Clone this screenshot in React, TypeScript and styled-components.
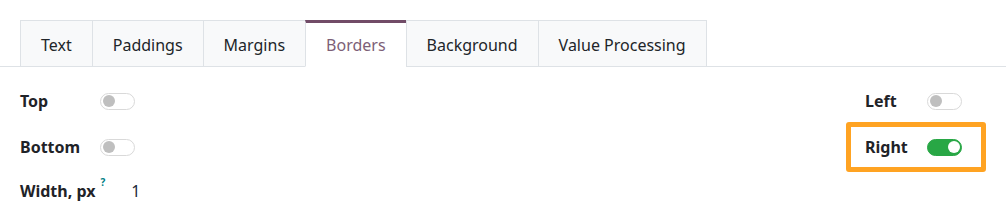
import React from 'react';
import styled, { createGlobalStyle } from 'styled-components';

const GlobalStyle = createGlobalStyle`
    html, body {
        margin: 0;
        padding: 0;
        background: #ffffff;
        font-family: 'Noto Sans', 'Open Sans', sans-serif;
        color: #212529;
    }
`;

export const Page = styled.div`
    width: 1006px;
    height: 219px;
    overflow: hidden;
    background: #fff;
`;

export const TabBar = styled.div`
    display: flex;
    margin-top: 20px;
    padding-left: 20px;
    border-bottom: 1px solid #dee2e6;
`;

export const Tab = styled.div<{ $active?: boolean }>`
    display: flex;
    align-items: center;
    height: 47px;
    box-sizing: border-box;
    padding: 0 20px;
    margin-bottom: -1px;
    margin-left: -1px;
    font-size: 16px;
    border: 1px solid #dee2e6;
    border-top: ${(p) => (p.$active ? '3px solid #714b67' : '1px solid #dee2e6')};
    border-bottom: ${(p) => (p.$active ? '1px solid #fff' : '1px solid #dee2e6')};
    background: ${(p) => (p.$active ? '#fff' : '#f8f9fa')};
    color: ${(p) => (p.$active ? '#7d5f77' : '#212529')};
    padding-top: ${(p) => (p.$active ? '0px' : '2px')};
    &:first-child {
        margin-left: 0;
    }
`;

export const Form = styled.div`
    display: flex;
    justify-content: space-between;
    padding: 22px 44px 0 20px;
`;

export const Column = styled.div`
    display: flex;
    flex-direction: column;
`;

export const Row = styled.div<{ $gap?: number; $highlight?: boolean }>`
    position: relative;
    display: flex;
    align-items: center;
    height: 24px;
    margin-top: ${(p) => p.$gap ?? 0}px;
    ${(p) =>
        p.$highlight &&
        `
        &::after {
            content: '';
            position: absolute;
            left: -19px;
            right: -24px;
            top: -13px;
            bottom: -13px;
            border: 5px solid #ffa322;
            border-radius: 3px;
        }
    `}
`;

export const Label = styled.label<{ $width?: number }>`
    display: inline-flex;
    align-items: flex-start;
    width: ${(p) => (p.$width ? `${p.$width}px` : 'auto')};
    font-size: 16px;
    font-weight: 700;
    color: #1f2328;
`;

export const Help = styled.sup`
    margin-left: 5px;
    font-size: 10px;
    font-weight: 700;
    color: #017e84;
    line-height: 1;
    position: relative;
    top: -3px;
`;

export const Value = styled.span`
    margin-left: 26px;
    font-size: 16px;
    color: #1d2a3a;
`;

export const Switch = styled.span<{ $on?: boolean }>`
    position: relative;
    display: inline-block;
    width: 35px;
    height: 17px;
    box-sizing: border-box;
    border-radius: 9px;
    border: 1px solid ${(p) => (p.$on ? '#28a745' : '#d9d9d9')};
    background: ${(p) => (p.$on ? '#28a745' : '#fff')};
    &::after {
        content: '';
        position: absolute;
        top: 1.5px;
        left: ${(p) => (p.$on ? '19.5px' : '2px')};
        width: 12px;
        height: 12px;
        border-radius: 50%;
        background: ${(p) => (p.$on ? '#fff' : '#bfbfbf')};
    }
`;

const tabs = ['Text', 'Paddings', 'Margins', 'Borders', 'Background', 'Value Processing'];

export default function App() {
    return (
        <Page>
            <GlobalStyle />
            <TabBar>
                {tabs.map((t) => (
                    <Tab key={t} $active={t === 'Borders'}>
                        {t}
                    </Tab>
                ))}
            </TabBar>
            <Form>
                <Column>
                    <Row>
                        <Label $width={80}>Top</Label>
                        <Switch />
                    </Row>
                    <Row $gap={22}>
                        <Label $width={80}>Bottom</Label>
                        <Switch />
                    </Row>
                    <Row $gap={20}>
                        <Label>
                            Width, px<Help>?</Help>
                        </Label>
                        <Value>1</Value>
                    </Row>
                </Column>
                <Column>
                    <Row>
                        <Label $width={62}>Left</Label>
                        <Switch />
                    </Row>
                    <Row $gap={22} $highlight>
                        <Label $width={62}>Right</Label>
                        <Switch $on />
                    </Row>
                </Column>
            </Form>
        </Page>
    );
}
